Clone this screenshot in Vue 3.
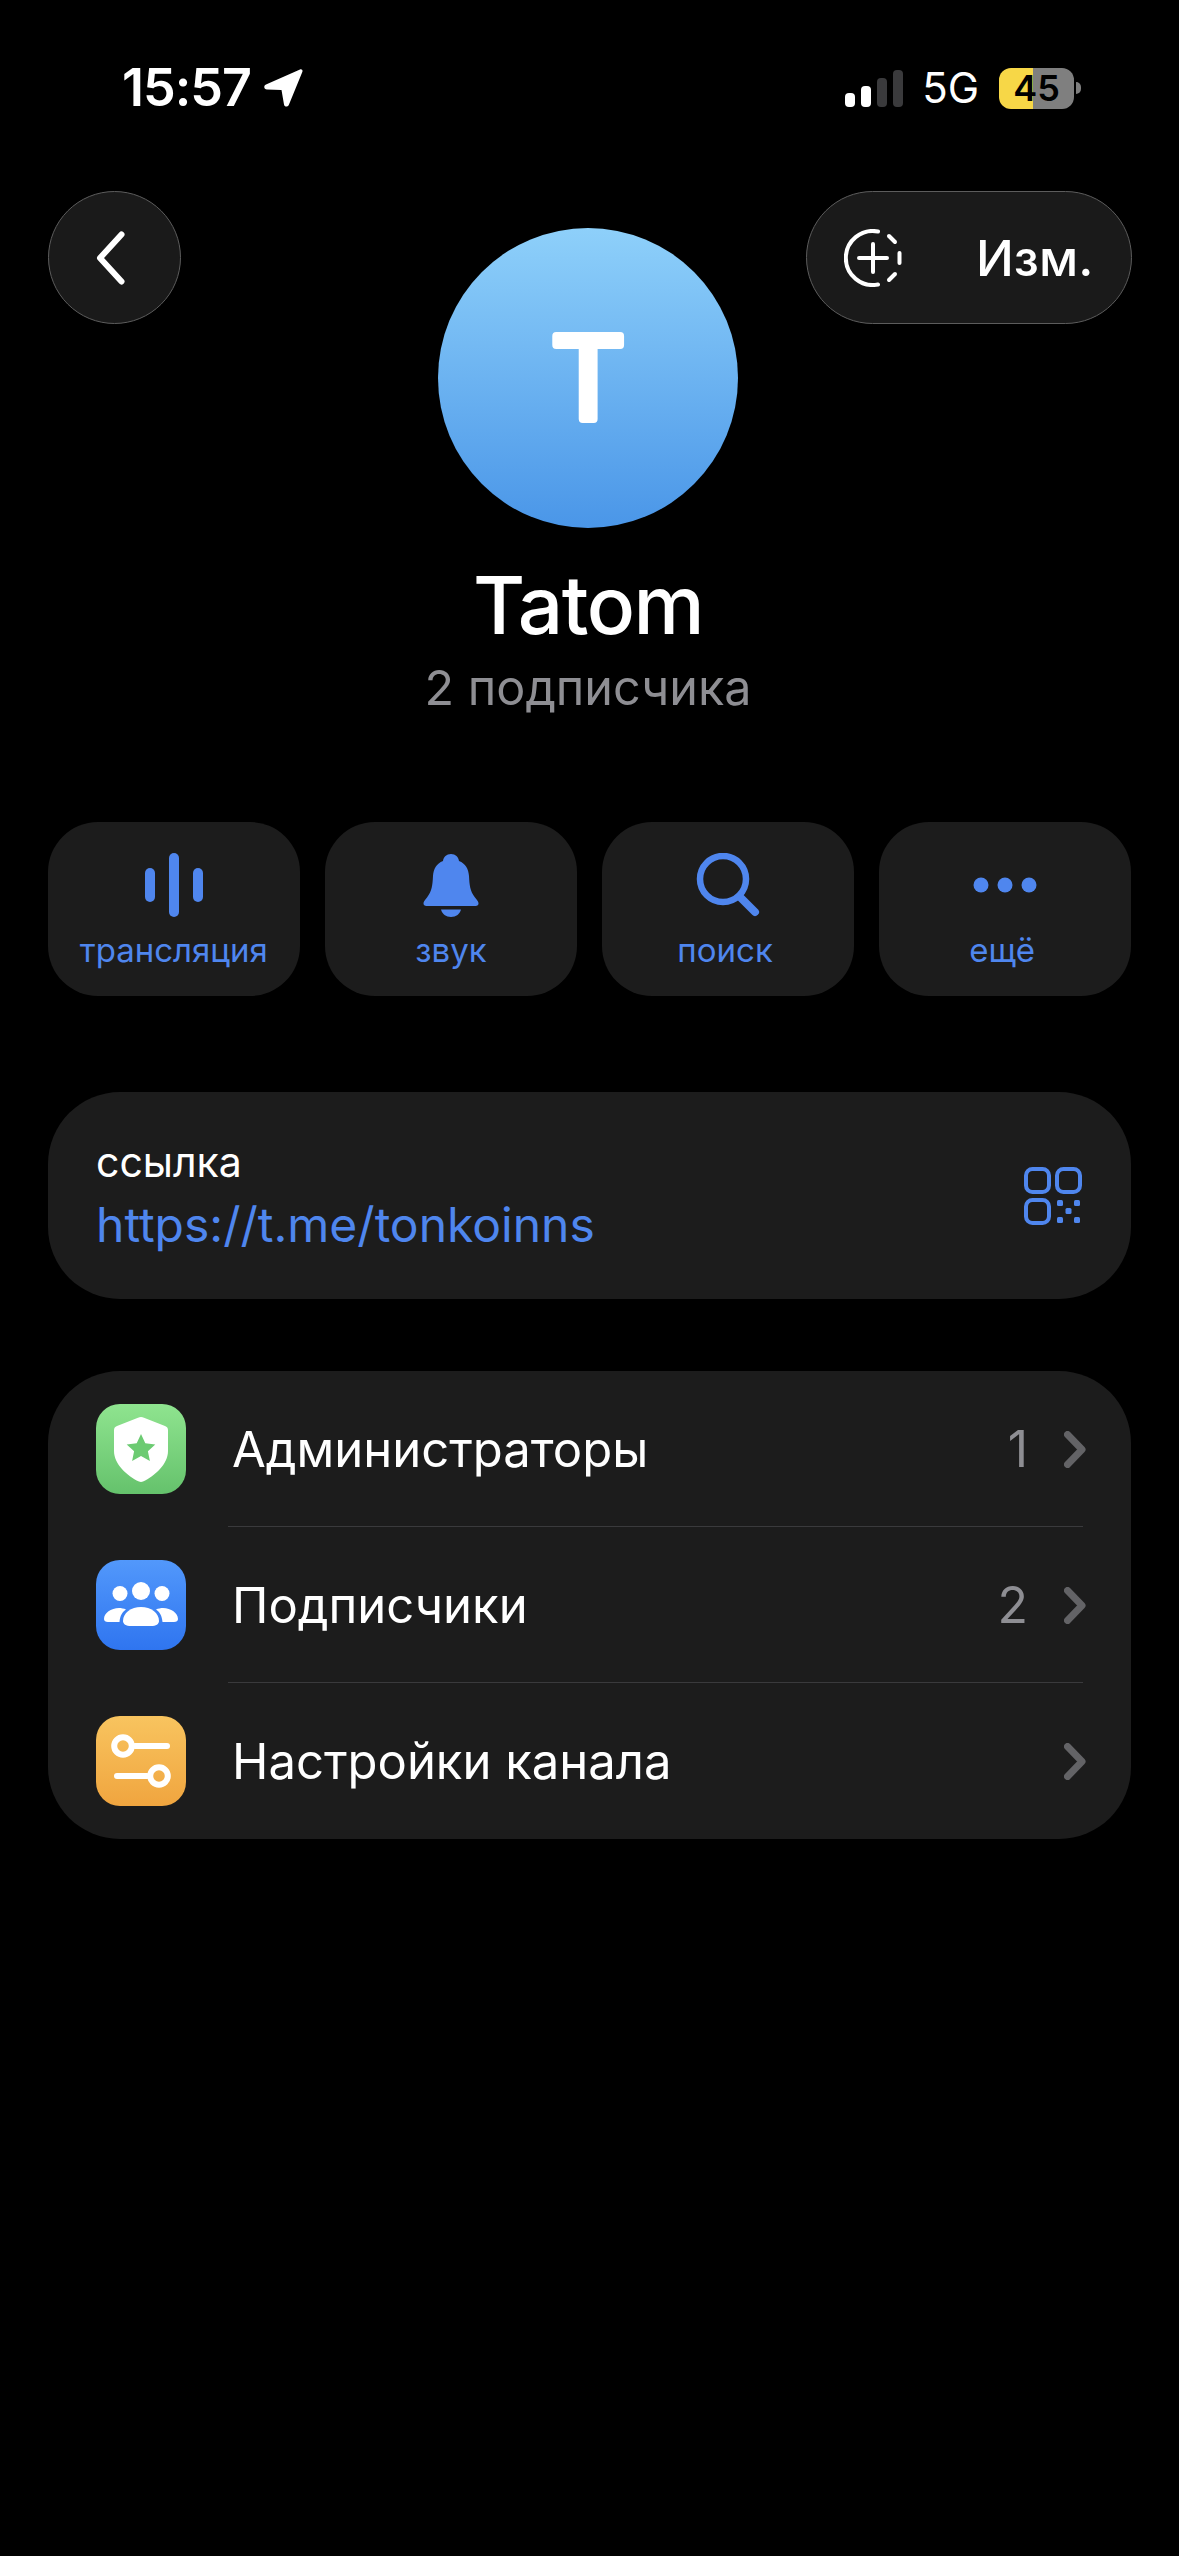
<template>
  <div class="screen">
    <div class="status">
      <div class="status-left">
        <span class="time">15:57</span>
        <svg class="loc" viewBox="0 0 39 38"><path d="M36 .6c1.500-.8 3 .6 2.400 2.200L25 35.500c-1 2.800-4.500 2.800-5 0L17.500 21 3 20.500c-3-.2-3.800-3.800-1-5z" fill="#fff"/></svg>
      </div>
      <div class="status-right">
        <div class="signal">
          <i class="b1"></i><i class="b2"></i><i class="b3"></i><i class="b4"></i>
        </div>
        <span class="net">5G</span>
        <div class="battery">
          <div class="battery-body"><span>45</span></div>
          <div class="battery-nub"></div>
        </div>
      </div>
    </div>

    <div class="topbar">
      <button class="back">
        <svg width="30" height="54" viewBox="0 0 30 54"><path d="M25.500 3.500 4 27l21.500 23.500" fill="none" stroke="#fff" stroke-width="6" stroke-linecap="round" stroke-linejoin="round"/></svg>
      </button>
      <button class="edit">
        <svg class="story" width="58" height="58" viewBox="0 0 58 58" fill="none" stroke="#fff" stroke-width="4" stroke-linecap="round">
          <path d="M34 2.500A27 27 0 1 0 34 55.500"/>
          <path d="M45 7l6 6"/>
          <path d="M55.500 24v10"/>
          <path d="M51 45l-6 6"/>
          <path d="M29 15v28M15 29h28"/>
        </svg>
        <span>Изм.</span>
      </button>
    </div>

    <div class="profile">
      <div class="avatar">
        <svg width="300" height="300" viewBox="0 0 300 300">
          <text x="150" y="191" text-anchor="middle">T</text>
        </svg>
      </div>
      <div class="name">Tatom</div>
      <div class="subs">2 подписчика</div>
    </div>

    <div class="actions">
      <div class="action" v-for="a in actions" :key="a.label">
        <div class="action-icon" v-html="a.icon"></div>
        <div class="action-label">{{ a.label }}</div>
      </div>
    </div>

    <div class="card link">
      <div>
        <div class="link-title">ссылка</div>
        <div class="link-url">https://t.me/tonkoinns</div>
      </div>
      <svg class="qr" width="58" height="58" viewBox="0 0 58 58" fill="#4f86ee">
        <g fill="none" stroke="#4f86ee" stroke-width="4">
          <rect x="2" y="2" width="23" height="23" rx="6.500"/>
          <rect x="33" y="2" width="23" height="23" rx="6.500"/>
          <rect x="2" y="33" width="23" height="23" rx="6.500"/>
        </g>
        <rect x="33" y="33" width="6" height="6" rx="1.500"/>
        <rect x="50" y="33" width="6" height="6" rx="1.500"/>
        <rect x="41.500" y="41" width="6" height="6" rx="1.500"/>
        <rect x="33" y="50" width="6" height="6" rx="1.500"/>
        <rect x="50" y="50" width="6" height="6" rx="1.500"/>
      </svg>
    </div>

    <div class="card list">
      <div class="row" v-for="r in rows" :key="r.title">
        <div class="row-icon" :class="r.cls" v-html="r.icon"></div>
        <div class="row-body">
          <span class="row-title">{{ r.title }}</span>
          <span class="row-count" v-if="r.count">{{ r.count }}</span>
          <svg class="chev" width="22" height="37" viewBox="0 0 22 37"><path d="M3.500 3.500 18 18.500 3.500 33.500" fill="none" stroke="#636366" stroke-width="7" stroke-linecap="round" stroke-linejoin="round"/></svg>
        </div>
      </div>
    </div>
  </div>
</template>

<script setup>
const actions = [
  {
    label: 'трансляция',
    icon: '<svg width="58" height="64" viewBox="0 0 58 64" fill="#4f86ee"><rect x="0" y="15" width="10" height="34" rx="5"/><rect x="24" y="0" width="10" height="64" rx="5"/><rect x="48" y="15" width="10" height="34" rx="5"/></svg>'
  },
  {
    label: 'звук',
    icon: '<svg width="56" height="64" viewBox="0 0 56 64" fill="#4f86ee"><path d="M28 1c4.500 0 7.500 3 8 7 6.500 2.500 9.500 8 10 15 .5 9 1 15 6 21.500 2.500 3 3.500 4 3.500 6 0 1.500-1 2.500-3 2.500H3.500c-2 0-3-1-3-2.500 0-2 1-3 3.500-6 5-6.500 5.500-12.500 6-21.500.5-7 3.500-12.500 10-15 .5-4 3.500-7 8-7z"/><path d="M18 56.500h20C37 61 33 64 28 64s-9-3-10-7.500z"/></svg>'
  },
  {
    label: 'поиск',
    icon: '<svg width="64" height="64" viewBox="0 0 64 64" fill="none" stroke="#4f86ee" stroke-linecap="round"><circle cx="27" cy="26" r="23" stroke-width="6.500"/><path d="M44 44l15 15" stroke-width="8"/></svg>'
  },
  {
    label: 'ещё',
    icon: '<svg width="64" height="64" viewBox="0 0 64 64" fill="#4f86ee"><circle cx="8" cy="32" r="7.500"/><circle cx="32" cy="32" r="7.500"/><circle cx="56" cy="32" r="7.500"/></svg>'
  }
]

const rows = [
  {
    title: 'Администраторы',
    count: '1',
    cls: 'green',
    icon: '<svg width="90" height="90" viewBox="0 0 90 90"><path d="M45 13c1 0 2 .3 3 .7l21 8.300c2 .8 3 2 3 4.200V47c0 13-13 25-25 30.500-1.300.6-2.700.6-4 0C31 72 18 60 18 47V26.200c0-2.200 1-3.400 3-4.200l21-8.300c1-.4 2-.7 3-.7z" fill="#fff"/><path d="M45 30l4.300 9.200 10 1.200-7.400 6.800 2 9.800L45 52.100 36.100 57l2-9.800-7.400-6.800 10-1.200z" fill="#6ccb72"/></svg>'
  },
  {
    title: 'Подписчики',
    count: '2',
    cls: 'blue',
    icon: '<svg width="90" height="90" viewBox="0 0 90 90" fill="#fff"><circle cx="45" cy="31" r="9"/><circle cx="24" cy="33.500" r="7.500"/><circle cx="66" cy="33.500" r="7.500"/><path d="M35 66c-5 0-8-2-8-5 0-8 8-14 18-14s18 6 18 14c0 3-3 5-8 5z"/><path d="M8 59c0-6 7-11 15-11 2 0 5 .5 7 1.500-3.500 2.500-6 6-6.500 12.500H12c-2.500 0-4-1-4-3z"/><path d="M82 59c0-6-7-11-15-11-2 0-5 .5-7 1.500 3.500 2.500 6 6 6.500 12.500H78c2.500 0 4-1 4-3z"/></svg>'
  },
  {
    title: 'Настройки канала',
    cls: 'orange',
    icon: '<svg width="90" height="90" viewBox="0 0 90 90" fill="none" stroke="#fff" stroke-width="6" stroke-linecap="round"><circle cx="27" cy="30" r="8.800"/><path d="M39 30h32"/><circle cx="63" cy="60" r="8.800"/><path d="M21 60h30"/></svg>'
  }
]
</script>

<style>
html, body {
  margin: 0;
  background: #000;
}
</style>

<style scoped>
.screen {
  width: 1179px;
  height: 2556px;
  background: #000;
  color: #fff;
  font-family: Inter, "Noto Sans", sans-serif;
  overflow: hidden;
}
.status {
  height: 191px;
  padding: 69px 98px 0 122px;
  box-sizing: border-box;
  display: flex;
  justify-content: space-between;
  align-items: flex-start;
}
.status-left {
  display: flex;
  align-items: center;
  gap: 13px;
  height: 38px;
}
.time {
  font-size: 52px;
  font-weight: 600;
  line-height: 38px;
  letter-spacing: -1px;
}
.loc {
  width: 39px;
  height: 38px;
}
.status-right {
  display: flex;
  align-items: center;
  height: 38px;
}
.signal {
  display: flex;
  align-items: flex-end;
  gap: 6px;
  height: 37px;
  margin-right: 19px;
}
.signal i {
  display: block;
  width: 10px;
  border-radius: 4px;
  background: #fff;
}
.signal .b1 { height: 14px; }
.signal .b2 { height: 21px; }
.signal .b3 { height: 29px; background: #3a3a3c; }
.signal .b4 { height: 37px; background: #3a3a3c; }
.net {
  font-size: 42px;
  font-weight: 400;
  line-height: 38px;
  margin-right: 20px;
}
.battery {
  display: flex;
  align-items: center;
  gap: 2px;
}
.battery-body {
  width: 75px;
  height: 41px;
  border-radius: 12px;
  background: linear-gradient(90deg, #f7d747 45%, #7f7f7f 45%);
  color: #000;
  font-size: 36px;
  font-weight: 600;
  display: flex;
  align-items: center;
  justify-content: center;
}
.battery-nub {
  width: 5px;
  height: 12px;
  border-radius: 0 6px 6px 0;
  background: #7f7f7f;
}
.topbar {
  height: 133px;
  padding: 0 47px 0 48px;
  display: flex;
  justify-content: space-between;
  position: relative;
  z-index: 1;
}
.back, .edit {
  background: #1a1a1a;
  border: 1.500px solid #5c5c5c;
  border-radius: 67px;
  height: 133px;
  box-sizing: border-box;
  padding: 0;
  color: #fff;
  font-family: inherit;
  display: flex;
  align-items: center;
}
.back {
  width: 133px;
  justify-content: center;
}
.back svg {
  margin-right: 7px;
}
.edit {
  width: 326px;
  padding-left: 37px;
}
.edit span {
  margin-left: 74px;
  font-size: 50px;
  font-weight: 500;
}
.profile {
  margin-top: -96px;
  padding-right: 3px;
  display: flex;
  flex-direction: column;
  align-items: center;
}
.avatar {
  width: 300px;
  height: 300px;
  border-radius: 50%;
  background: linear-gradient(180deg, #8ed0fa, #4a96e8);
}
.avatar svg {
  display: block;
}
.avatar text {
  font-family: Roboto, sans-serif;
  font-size: 116px;
  font-weight: 400;
  fill: #fff;
  stroke: #fff;
  stroke-width: 8px;
  stroke-linejoin: round;
}
.name {
  margin-top: 29px;
  font-size: 80px;
  font-weight: 500;
  line-height: 96px;
  letter-spacing: -1.500px;
}
.subs {
  margin-top: 5px;
  font-size: 48.500px;
  line-height: 60px;
  color: #8e8e93;
}
.actions {
  margin: 104px 48px 0;
  display: grid;
  grid-template-columns: repeat(4, 1fr);
  gap: 25.500px;
}
.action {
  height: 174px;
  border-radius: 50px;
  background: #1c1c1c;
  display: flex;
  flex-direction: column;
  align-items: center;
  padding-top: 31px;
  box-sizing: border-box;
}
.action-icon {
  height: 64px;
  display: flex;
  align-items: center;
}
.action-label {
  margin-top: 12px;
  font-size: 33px;
  line-height: 42px;
  color: #4f86ee;
}
.action:nth-child(n+3) .action-label {
  padding-right: 6px;
}
.card {
  margin: 0 48px;
  background: #1c1c1c;
  border-radius: 72px;
}
.link {
  margin-top: 96px;
  height: 207px;
  padding: 0 48px;
  box-sizing: border-box;
  display: flex;
  align-items: center;
  justify-content: space-between;
}
.link-title {
  font-size: 41px;
  line-height: 50px;
}
.link-url {
  margin-top: 8px;
  font-size: 48px;
  line-height: 60px;
  color: #4f86ee;
}
.qr {
  margin-right: 1px;
}
.list {
  margin-top: 72px;
}
.row {
  height: 156px;
  display: flex;
  align-items: center;
  padding-left: 48px;
}
.row-icon {
  width: 90px;
  height: 90px;
  border-radius: 24px;
  flex: none;
}
.green { background: linear-gradient(180deg, #8fe48f, #65c26c); }
.blue { background: linear-gradient(180deg, #5298fb, #2f75f0); }
.orange { background: linear-gradient(180deg, #f8c45f, #f0a53f); }
.row-body {
  flex: 1;
  height: 100%;
  margin-left: 42px;
  padding: 0 45px 0 4px;
  display: flex;
  align-items: center;
  box-sizing: border-box;
  position: relative;
}
.row-body::after {
  content: '';
  position: absolute;
  left: 0;
  right: 48px;
  bottom: 0;
  height: 1px;
  background: #3a3a3c;
}
.row:last-child .row-body::after {
  display: none;
}
.row-title {
  flex: 1;
  font-size: 49px;
}
.row-count {
  font-size: 50px;
  color: #8e8e93;
  margin-right: 36px;
}
</style>
